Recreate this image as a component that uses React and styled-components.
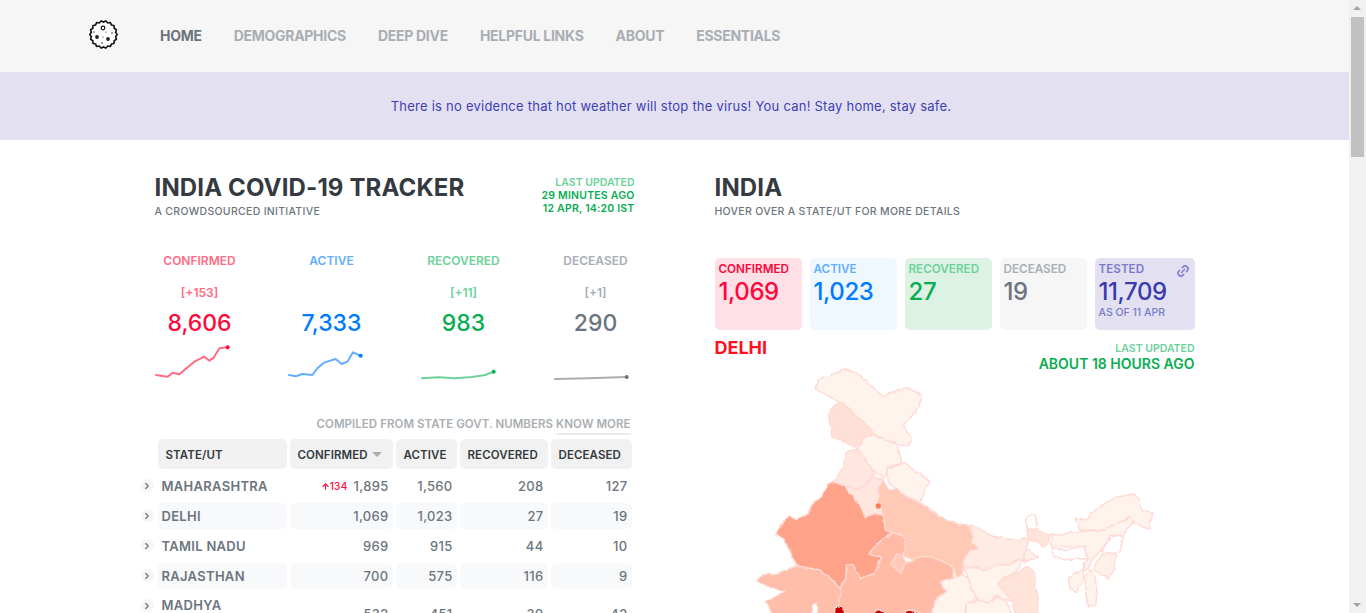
import styled, { createGlobalStyle } from "styled-components";
import { ChevronRight, ArrowUp, Link2 } from "lucide-react";

const tones = {
  confirmed: { main: "#ff073a", soft: "#ff6c84", bg: "#ffe0e6" },
  active: { main: "#007bff", soft: "#62aeff", bg: "#eff7ff" },
  recovered: { main: "#0aad52", soft: "#6cd29a", bg: "#ddf2e5" },
  deceased: { main: "#6c757d", soft: "#a9aeb3", bg: "#f6f6f7" },
  tested: { main: "#3a3ab0", soft: "#7a7ac8", bg: "#e3e1f1" },
};

const GlobalStyle = createGlobalStyle`
  body {
    margin: 0;
    padding-right: 17px;
    background: #fff;
    font-family: Inter, "Liberation Sans", sans-serif;
  }
`;

const ScrollTrack = styled.div`
  position: fixed;
  top: 0;
  right: 0;
  bottom: 0;
  width: 17px;
  background: #f1f1f1;
`;

const ScrollThumb = styled.div`
  position: absolute;
  top: 17px;
  left: 2px;
  width: 13px;
  height: 140px;
  background: #c1c1c1;
`;

const ScrollArrow = styled.i`
  position: absolute;
  left: 4px;
  ${(p) => (p.$down ? "bottom: 6px;" : "top: 6px;")}
  width: 0;
  height: 0;
  border-left: 4px solid transparent;
  border-right: 4px solid transparent;
  ${(p) => (p.$down ? "border-top: 4px solid #a3a3a3;" : "border-bottom: 4px solid #a3a3a3;")}
`;

const Navbar = styled.nav`
  display: flex;
  align-items: center;
  height: 72px;
  padding-left: 89px;
  background: #f6f6f7;
`;

const LogoWrap = styled.div`
  display: flex;
  width: 71px;
  margin-top: -3px;
`;

const NavLink = styled.a`
  margin-right: 32px;
  margin-bottom: 1px;
  font-size: 14px;
  font-weight: 700;
  letter-spacing: -0.28px;
  color: ${(p) => (p.$current ? "#6c757d" : "#a9aeb3")};
  text-transform: uppercase;
`;

const Banner = styled.div`
  display: flex;
  align-items: center;
  justify-content: center;
  height: 68px;
  padding: 0 7px 1px 0;
  box-sizing: border-box;
  background: #e3e1f1;
  color: #3f3fb5;
  font-size: 13px;
  font-weight: 400;
  letter-spacing: 0.24px;
`;

const Main = styled.main`
  display: grid;
  grid-template-columns: 480px 480px;
  column-gap: 80px;
  width: 1040px;
  min-height: 2395px;
  margin: 0 auto;
  padding-top: 34px;
  align-items: start;
`;

const Column = styled.section`
  display: flex;
  flex-direction: column;
`;

const HeadRow = styled.header`
  display: flex;
  justify-content: space-between;
  height: 84px;
`;

const Title = styled.h1`
  margin: 0;
  font-size: 24px;
  line-height: 28px;
  font-weight: 700;
  letter-spacing: 0.14px;
  color: #343a40;
`;

const Subtitle = styled.h6`
  margin: 3px 0 0;
  font-size: 10.5px;
  line-height: 13px;
  font-weight: 500;
  letter-spacing: 0.3px;
  color: #6c757d;
`;

const Updated = styled.div`
  padding-top: 2px;
  text-align: right;
  font-size: 10.5px;
  line-height: 13px;
  font-weight: 600;
  letter-spacing: 0.2px;
  color: ${tones.recovered.main};
`;

const SoftLine = styled.div`
  letter-spacing: 0;
  color: ${tones.recovered.soft};
`;

const Levels = styled.div`
  display: grid;
  grid-template-columns: repeat(4, 88px);
  column-gap: 44px;
  height: 164px;
  margin: -4px 0 0 1px;
`;

const Level = styled.div`
  display: flex;
  flex-direction: column;
  align-items: center;
  color: ${(p) => tones[p.$tone].main};
`;

const LevelLabel = styled.div`
  height: 24px;
  font-size: 12px;
  line-height: 14px;
  font-weight: 600;
  color: ${(p) => tones[p.$tone].soft};
`;

const LevelDelta = styled.div`
  height: 19px;
  padding-top: 8px;
  font-size: 12px;
  line-height: 14px;
  font-weight: 600;
  color: ${(p) => tones[p.$tone].soft};
`;

const LevelValue = styled.div`
  margin-top: 3px;
  font-size: 23px;
  line-height: 30px;
  font-weight: 500;
`;

const SparkBox = styled.svg`
  display: block;
  align-self: flex-start;
  width: 80px;
  height: 40px;
  margin: 2px 0 0 ${(p) => p.$shift}px;
  overflow: visible;
`;

const Note = styled.div`
  align-self: flex-end;
  margin: 0 4px 8px 0;
  font-size: 11.5px;
  line-height: 13px;
  font-weight: 600;
  letter-spacing: 0.05px;
  color: #a9aeb3;
`;

const NoteLink = styled.span`
  padding-bottom: 2px;
  border-bottom: 2px solid #ececec;
`;

const Table = styled.div`
  display: flex;
  flex-direction: column;
  gap: 4px;
  margin-left: 3px;
`;

const Row = styled.div`
  position: relative;
  display: grid;
  grid-template-columns: 129px 103px 61px 88px 81px;
  column-gap: 3px;
`;

const HeadCell = styled.div`
  display: flex;
  align-items: center;
  gap: 4px;
  height: 30px;
  padding: 1px 0 0 8px;
  box-sizing: border-box;
  border-radius: 5px;
  background: #f1f1f1;
  font-size: 11.5px;
  font-weight: 600;
  letter-spacing: 0.1px;
  color: #343a40;
`;

const SortMark = styled.i`
  width: 0;
  height: 0;
  border-left: 5px solid transparent;
  border-right: 5px solid transparent;
  border-top: 5px solid #a9aeb3;
`;

const Cell = styled.div`
  display: flex;
  align-items: center;
  justify-content: ${(p) => (p.$state ? "flex-start" : "flex-end")};
  min-height: 26px;
  padding: ${(p) => (p.$state ? "3px 4px" : "0 4px 0 0")};
  box-sizing: border-box;
  border-radius: 5px;
  background: ${(p) => (p.$shaded ? "#f8f9fa" : "#fff")};
  font-size: 13px;
  font-weight: ${(p) => (p.$state ? 600 : 500)};
  line-height: 18px;
  letter-spacing: 0.3px;
  color: #6c757d;
`;

const Expander = styled.span`
  position: absolute;
  left: -17px;
  top: 6px;
  display: flex;
  align-items: center;
  justify-content: center;
  width: 13px;
  height: 13px;
  border-radius: 50%;
  background: #f6f6f7;
  color: #6c757d;
`;

const Delta = styled.span`
  display: inline-flex;
  align-items: center;
  margin-right: 6px;
  font-size: 10px;
  font-weight: 500;
  color: ${tones.confirmed.main};
`;

const Cards = styled.div`
  display: grid;
  grid-template-columns: repeat(4, 87px) 100px;
  column-gap: 8px;
`;

const Card = styled.div`
  position: relative;
  height: 72px;
  padding: 4px;
  box-sizing: border-box;
  border-radius: 5px;
  background: ${(p) => tones[p.$tone].bg};
  color: ${(p) => tones[p.$tone].main};
`;

const CardLabel = styled.div`
  font-size: 11.7px;
  line-height: 14px;
  font-weight: 600;
  color: ${(p) => (p.$tone === "confirmed" ? tones.confirmed.main : tones[p.$tone].soft)};
`;

const CardValue = styled.div`
  margin-top: 1px;
  font-size: 24px;
  line-height: 30px;
  font-weight: 500;
  letter-spacing: -0.4px;
`;

const CardNote = styled.div`
  font-size: 10.5px;
  line-height: 12px;
  font-weight: 500;
  color: ${tones.tested.soft};
`;

const LinkMark = styled.span`
  position: absolute;
  top: 4px;
  right: 5px;
  color: ${tones.tested.soft};
`;

const StateRow = styled.div`
  display: flex;
  justify-content: space-between;
  height: 30px;
  margin-top: 9px;
`;

const StateName = styled.h2`
  margin: 0;
  font-size: 18px;
  line-height: 18px;
  font-weight: 700;
  color: #ff0f1f;
`;

const StateUpdated = styled.div`
  padding-top: 3px;
  text-align: right;
  font-size: 10.5px;
  line-height: 13px;
  font-weight: 600;
  color: ${tones.recovered.soft};
`;

const StateAgo = styled.div`
  font-size: 14px;
  line-height: 17px;
  font-weight: 600;
  color: ${tones.recovered.main};
`;

const MapSvg = styled.svg`
  display: block;
  width: 430px;
  height: 260px;
  margin: -1px 0 0 25px;
  stroke: #ffd9d3;
  stroke-width: 4;
  stroke-linejoin: round;
`;

const navItems = ["Home", "Demographics", "Deep Dive", "Helpful Links", "About", "Essentials"];

const levels = [
  { tone: "confirmed", label: "CONFIRMED", delta: "[+153]", value: "8,606", line: "0,630 35,635 50,623 70,628 85,615 115,590 145,575 160,587 173,578 190,550 215,547" },
  { tone: "active", label: "ACTIVE", delta: "", value: "7,333", line: "0,630 20,634 40,627 70,630 85,610 105,593 140,582 158,597 175,590 192,562 215,572" },
  { tone: "recovered", label: "RECOVERED", delta: "[+11]", value: "983", line: "0,640 50,637 100,640 150,636 190,630 215,620" },
  { tone: "deceased", label: "DECEASED", delta: "[+1]", value: "290", line: "0,642 100,640 190,637 215,636" },
];

const rows = [
  ["MAHARASHTRA", "1,895", "1,560", "208", "127", "134"],
  ["DELHI", "1,069", "1,023", "27", "19"],
  ["TAMIL NADU", "969", "915", "44", "10"],
  ["RAJASTHAN", "700", "575", "116", "9"],
  ["MADHYA PRADESH", "532", "451", "39", "42"],
];

const cards = [
  { tone: "confirmed", label: "CONFIRMED", value: "1,069" },
  { tone: "active", label: "ACTIVE", value: "1,023" },
  { tone: "recovered", label: "RECOVERED", value: "27" },
  { tone: "deceased", label: "DECEASED", value: "19" },
];

const mapStates = [
  ["#fff3ee", "228,70 235,45 270,30 315,15 345,22 375,45 405,75 432,95 460,80 505,70 540,85 545,100 530,140 500,170 490,180 500,200 515,215 505,240 485,245 465,235 435,225 400,205 375,175 345,150 325,128 295,112 270,95 235,78"],
  ["#ffe0d6", "295,112 325,128 345,150 375,175 398,205 375,218 360,248 330,240 310,228 275,215 265,150 275,128"],
  ["#ffe7df", "350,250 365,275 385,295 405,325 395,335 370,365 345,372 315,360 283,350 310,305 315,265"],
  ["#fff3ee", "398,208 435,225 470,238 480,270 485,295 445,305 435,340 415,330 385,295 355,250 375,218"],
  ["#fff3ee", "440,310 480,300 495,292 520,315 545,330 572,350 555,370 540,410 500,395 470,375 445,350"],
  ["#ffe7df", "310,362 345,375 370,365 400,335 430,345 415,375 420,415 430,450 405,445 375,458 365,430 340,395"],
  ["#ffc9b6", "432,345 445,375 470,372 500,395 540,412 580,440 620,465 660,480 685,480 700,515 695,530 715,552 690,560 670,585 668,625 650,640 640,605 610,590 570,575 540,575 515,585 490,572 495,520 480,505 458,502 436,495 430,450 415,410 415,370"],
  ["#ffa28a", "283,352 310,362 340,395 365,430 375,458 405,445 430,455 436,495 458,503 425,525 395,555 390,570 425,575 415,600 405,625 360,640 340,600 320,595 318,640 300,670 270,640 240,615 170,603 150,560 130,520 105,505 130,465 150,455 165,462 200,450 215,420 245,395 262,360"],
  ["#ffbba6", "458,503 480,510 495,520 490,572 470,570 455,600 480,625 495,595 520,585 540,575 570,575 610,590 640,605 640,640 600,650 620,680 590,700 560,790 300,790 295,700 300,670 318,640 320,595 340,600 360,640 405,625 415,600 425,575 390,570 395,555 425,525"],
  ["#ffc9b6", "470,570 490,572 495,595 480,625 455,600"],
  ["#ffbeaa", "50,648 65,630 110,625 170,603 240,615 270,640 300,670 305,685 295,700 295,790 232,790 230,710 217,720 220,790 115,790 80,710 105,695 135,680 85,665"],
  ["#fff3ee", "600,650 640,640 670,630 685,640 700,680 710,700 680,715 665,790 560,790 590,700 620,680"],
  ["#ffebe4", "690,478 720,490 745,510 790,520 830,525 860,520 865,535 855,560 850,590 830,580 810,600 770,600 740,615 700,605 670,605 670,585 690,560 715,552 695,530 700,515"],
  ["#fff3ee", "670,610 700,608 740,615 770,600 810,600 830,585 845,590 830,620 790,640 770,655 795,680 815,710 790,700 770,690 745,715 715,705 700,680 685,640"],
  ["#fff0ea", "850,560 865,555 895,578 870,585 855,590"],
  ["#ffe4da", "770,655 830,625 860,605 885,625 885,660 895,700 890,790 840,790 815,710 795,680"],
  ["#fff3ee", "672,790 680,715 715,705 745,715 770,695 800,710 830,790"],
  ["#ffffff", "860,455 885,450 892,480 885,495 860,490"],
  ["#ffe4da", "860,495 885,493 930,510 925,535 910,545 895,530 865,525"],
  ["#fff3ee", "935,510 1020,500 1095,495 1170,455 1180,470 1150,510 1110,515 1085,555 1070,570 1055,585 1045,610 1030,620 1030,595 1045,580 1030,545 1000,545 935,545"],
  ["#ffffff", "935,550 980,557 1010,543 1030,545 1045,580 990,583 940,577"],
  ["#fff3ee", "1005,460 1040,465 1070,430 1120,400 1140,395 1180,387 1200,405 1205,433 1240,445 1230,475 1230,493 1205,485 1180,470 1170,455 1095,495 1020,495 1010,475"],
  ["#ffffff", "1085,560 1110,515 1150,510 1140,560 1120,565"],
  ["#fff0ea", "1060,615 1085,570 1130,565 1125,610 1105,640"],
  ["#fff3ee", "1035,640 1050,615 1065,635 1070,675 1068,720 1045,723 1035,675"],
  ["#fff3ee", "985,645 1000,625 1030,617 1030,645 1010,680 990,670"],
  ["#c80000", "280,790 285,728 305,725 312,738 330,790"],
  ["#c80000", "398,790 405,738 418,734 432,742 440,790"],
  ["#c80000", "488,790 497,738 507,735 522,738 545,745 550,790"],
];

// scalloped edge of the logo
const logoEdge = Array.from({ length: 72 }, (_, i) => {
  const a = (i / 72) * Math.PI * 2;
  const r = 13 + Math.cos(a * 18) * 0.7;
  return `${(14.5 + r * Math.cos(a)).toFixed(2)},${(14.5 + r * Math.sin(a)).toFixed(2)}`;
}).join(" ");

const Logo = () => (
  <svg width="29" height="29" viewBox="0 0 29 29">
    <polygon points={logoEdge} fill="#fff" stroke="#111" strokeWidth="1.6" />
    <circle cx="14" cy="8" r="1.8" fill="none" stroke="#111" strokeWidth="1.2" />
    <circle cx="8" cy="17" r="1.9" fill="#222" />
    <circle cx="19" cy="19" r="1.9" fill="#222" />
    <circle cx="23" cy="13" r="0.8" fill="#222" />
    <circle cx="13" cy="23" r="0.8" fill="#222" />
    <circle cx="17" cy="12" r="0.6" fill="#222" />
    <circle cx="5" cy="12" r="0.7" fill="#222" />
    <circle cx="14" cy="17" r="0.6" fill="#222" />
  </svg>
);

const Spark = ({ tone, line, shift }) => {
  const last = line.split(" ").pop().split(",");
  return (
    <SparkBox viewBox="0 525 240 120" $shift={shift}>
      <polyline points={line} fill="none" stroke={tones[tone].soft} strokeWidth="6" strokeLinejoin="round" strokeLinecap="round" />
      <circle cx={last[0]} cy={last[1]} r="6" fill={tones[tone].main} />
    </SparkBox>
  );
};

export default function App() {
  return (
    <>
      <GlobalStyle />
      <Navbar>
        <LogoWrap>
          <Logo />
        </LogoWrap>
        {navItems.map((item, i) => (
          <NavLink key={item} $current={i === 0}>
            {item}
          </NavLink>
        ))}
      </Navbar>
      <Banner>There is no evidence that hot weather will stop the virus! You can! Stay home, stay safe.</Banner>
      <Main>
        <Column>
          <HeadRow>
            <div>
              <Title>INDIA COVID-19 TRACKER</Title>
              <Subtitle>A CROWDSOURCED INITIATIVE</Subtitle>
            </div>
            <Updated>
              <SoftLine>LAST UPDATED</SoftLine>
              <div>29 MINUTES AGO</div>
              <div>12 APR, 14:20 IST</div>
            </Updated>
          </HeadRow>
          <Levels>
            {levels.map((l, i) => (
              <Level key={l.label} $tone={l.tone}>
                <LevelLabel $tone={l.tone}>{l.label}</LevelLabel>
                <LevelDelta $tone={l.tone}>{l.delta}</LevelDelta>
                <LevelValue>{l.value}</LevelValue>
                <Spark tone={l.tone} line={l.line} shift={i} />
              </Level>
            ))}
          </Levels>
          <Note>
            COMPILED FROM STATE GOVT. NUMBERS <NoteLink>KNOW MORE</NoteLink>
          </Note>
          <Table>
            <Row>
              <HeadCell>STATE/UT</HeadCell>
              <HeadCell>
                CONFIRMED <SortMark />
              </HeadCell>
              <HeadCell>ACTIVE</HeadCell>
              <HeadCell>RECOVERED</HeadCell>
              <HeadCell>DECEASED</HeadCell>
            </Row>
            {rows.map(([name, confirmed, active, recovered, deceased, delta], i) => (
              <Row key={name}>
                <Expander>
                  <ChevronRight size={10} strokeWidth={3} />
                </Expander>
                <Cell $state $shaded={i % 2 === 1}>
                  {name}
                </Cell>
                <Cell $shaded={i % 2 === 1}>
                  {delta && (
                    <Delta>
                      <ArrowUp size={9} strokeWidth={3} />
                      {delta}
                    </Delta>
                  )}
                  {confirmed}
                </Cell>
                <Cell $shaded={i % 2 === 1}>{active}</Cell>
                <Cell $shaded={i % 2 === 1}>{recovered}</Cell>
                <Cell $shaded={i % 2 === 1}>{deceased}</Cell>
              </Row>
            ))}
          </Table>
        </Column>
        <Column>
          <HeadRow>
            <div>
              <Title>INDIA</Title>
              <Subtitle>HOVER OVER A STATE/UT FOR MORE DETAILS</Subtitle>
            </div>
          </HeadRow>
          <Cards>
            {cards.map((c) => (
              <Card key={c.label} $tone={c.tone}>
                <CardLabel $tone={c.tone}>{c.label}</CardLabel>
                <CardValue>{c.value}</CardValue>
              </Card>
            ))}
            <Card $tone="tested">
              <CardLabel $tone="tested">TESTED</CardLabel>
              <LinkMark>
                <Link2 size={14} strokeWidth={2.5} style={{ transform: "rotate(-45deg)" }} />
              </LinkMark>
              <CardValue>11,709</CardValue>
              <CardNote>AS OF 11 APR</CardNote>
            </Card>
          </Cards>
          <StateRow>
            <StateName>DELHI</StateName>
            <StateUpdated>
              LAST UPDATED
              <StateAgo>ABOUT 18 HOURS AGO</StateAgo>
            </StateUpdated>
          </StateRow>
          <MapSvg viewBox="0 9 1290 780">
            <filter id="borders" x="-5%" y="-5%" width="110%" height="110%" colorInterpolationFilters="sRGB">
              <feTurbulence type="fractalNoise" baseFrequency="0.05" numOctaves="2" seed="4" />
              <feDisplacementMap in="SourceGraphic" scale="11" xChannelSelector="R" yChannelSelector="G" />
            </filter>
            <g filter="url(#borders)">
              {mapStates.map(([fill, points], i) => (
                <polygon key={i} points={points} fill={fill} />
              ))}
            </g>
            <circle cx="415" cy="423" r="8" fill="#ff7a5c" stroke="none" />
          </MapSvg>
        </Column>
      </Main>
      <ScrollTrack>
        <ScrollArrow />
        <ScrollThumb />
        <ScrollArrow $down />
      </ScrollTrack>
    </>
  );
}
